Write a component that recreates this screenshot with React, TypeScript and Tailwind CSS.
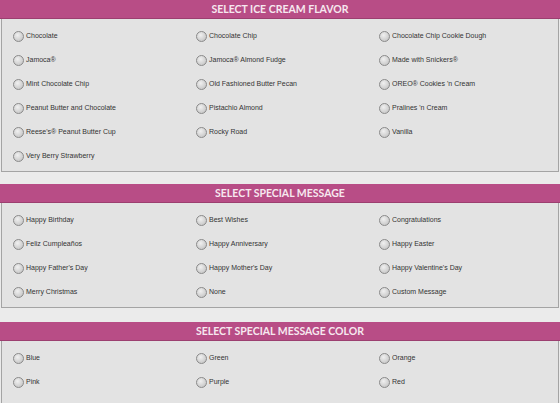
import clsx from 'clsx'

const sections: { title: string; options: string[] }[] = [
  {
    title: 'SELECT ICE CREAM FLAVOR',
    options: [
      'Chocolate',
      'Chocolate Chip',
      'Chocolate Chip Cookie Dough',
      'Jamoca®',
      'Jamoca® Almond Fudge',
      'Made with Snickers®',
      'Mint Chocolate Chip',
      'Old Fashioned Butter Pecan',
      "OREO® Cookies 'n Cream",
      'Peanut Butter and Chocolate',
      'Pistachio Almond',
      "Pralines 'n Cream",
      "Reese's® Peanut Butter Cup",
      'Rocky Road',
      'Vanilla',
      'Very Berry Strawberry',
    ],
  },
  {
    title: 'SELECT SPECIAL MESSAGE',
    options: [
      'Happy Birthday',
      'Best Wishes',
      'Congratulations',
      'Feliz Cumpleaños',
      'Happy Anniversary',
      'Happy Easter',
      "Happy Father's Day",
      "Happy Mother's Day",
      "Happy Valentine's Day",
      'Merry Christmas',
      'None',
      'Custom Message',
    ],
  },
  {
    title: 'SELECT SPECIAL MESSAGE COLOR',
    options: ['Blue', 'Green', 'Orange', 'Pink', 'Purple', 'Red'],
  },
]

function Radio() {
  return (
    <span className="w-[11px] h-[11px] rounded-full border border-[#8a8a8a] bg-[radial-gradient(circle_at_40%_35%,#f0f0f0,#bdbdbd)] shrink-0" />
  )
}

function Section({ title, options, idx }: { title: string; options: string[]; idx: number }) {
  return (
    <div className={clsx(idx === 0 && 'mb-[12px]', idx === 1 && 'mb-[14px]')}>
      <div className="h-[19px] bg-[#b84d86] border-b border-[#9c3f70] flex items-center justify-center">
        <span className="text-[#f6e8ef] font-bold text-[10.5px] font-['Lato','Liberation_Sans',sans-serif] leading-none">
          {title}
        </span>
      </div>
      <div
        className={clsx(
          'mx-px border-x border-b border-[#a4a4a4] bg-[#e3e3e3] pt-[5px] pl-[11px]',
          idx === 2 ? 'pb-[30px]' : 'pb-[3px]'
        )}
      >
        <div className="grid grid-cols-[183px_183px_1fr]">
          {options.map(o => (
            <label key={o} className="h-[24px] flex items-center gap-[2px]">
              <Radio />
              <span className="text-[7px] text-[#333] font-['Liberation_Sans',Arial,sans-serif]">{o}</span>
            </label>
          ))}
        </div>
      </div>
    </div>
  )
}

export default function App() {
  return (
    <div className="w-[560px] h-[403px] overflow-hidden bg-[#ebebeb]">
      {sections.map((s, i) => (
        <Section key={s.title} idx={i} {...s} />
      ))}
    </div>
  )
}
